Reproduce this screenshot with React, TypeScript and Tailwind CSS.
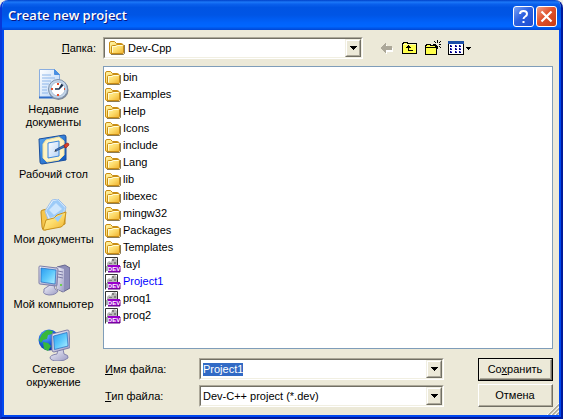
import { useEffect, useRef, useState } from "react";
import type { ReactNode } from "react";

const sunken =
  "border border-t-[#aca899] border-l-[#aca899] border-r-white border-b-white";
const sunkenInner =
  "border border-t-[#716f64] border-l-[#716f64] border-r-[#f1efe2] border-b-[#f1efe2]";
const raised =
  "border border-t-[#f1efe2] border-l-[#f1efe2] border-r-[#716f64] border-b-[#716f64]";
const raisedInner =
  "border border-t-white border-l-white border-r-[#aca899] border-b-[#aca899]";

const files = [
  { name: "bin", type: "folder" },
  { name: "Examples", type: "folder" },
  { name: "Help", type: "folder" },
  { name: "Icons", type: "folder" },
  { name: "include", type: "folder" },
  { name: "Lang", type: "folder" },
  { name: "lib", type: "folder" },
  { name: "libexec", type: "folder" },
  { name: "mingw32", type: "folder" },
  { name: "Packages", type: "folder" },
  { name: "Templates", type: "folder" },
  { name: "fayl", type: "dev" },
  { name: "Project1", type: "dev", compressed: true },
  { name: "proq1", type: "dev" },
  { name: "proq2", type: "dev" },
];

function Gradients() {
  return (
    <svg className="absolute size-0" aria-hidden="true">
      <defs>
        <linearGradient id="folder" x1="0" y1="0" x2="1" y2="1">
          <stop offset="0" stopColor="#fff6ac" />
          <stop offset="0.5" stopColor="#fddc6c" />
          <stop offset="1" stopColor="#eeb02c" />
        </linearGradient>
        <linearGradient id="screen" x1="0" y1="0" x2="1" y2="1">
          <stop offset="0" stopColor="#2b9cf0" />
          <stop offset="0.5" stopColor="#5cc8fb" />
          <stop offset="1" stopColor="#b8f2ff" />
        </linearGradient>
        <linearGradient id="metal" x1="0" y1="0" x2="1" y2="1">
          <stop offset="0" stopColor="#f4f4fb" />
          <stop offset="1" stopColor="#9c9cc4" />
        </linearGradient>
        <linearGradient id="paper" x1="0" y1="0" x2="1" y2="1">
          <stop offset="0" stopColor="#ffffff" />
          <stop offset="1" stopColor="#b4d2f6" />
        </linearGradient>
        <linearGradient id="desk" x1="0" y1="0" x2="1" y2="1">
          <stop offset="0" stopColor="#5aa6f0" />
          <stop offset="1" stopColor="#0b55bd" />
        </linearGradient>
        <radialGradient id="globe" cx="0.35" cy="0.3" r="0.8">
          <stop offset="0" stopColor="#6cb4ff" />
          <stop offset="0.5" stopColor="#1a62e0" />
          <stop offset="1" stopColor="#062a8c" />
        </radialGradient>
      </defs>
    </svg>
  );
}

function FolderIcon() {
  return (
    <svg viewBox="0 0 16 16" className="size-4 shrink-0" aria-hidden="true">
      <path d="M2 14.5h12.5l1-1V5" fill="none" stroke="#6f5a28" strokeOpacity="0.8" />
      <path
        d="M.5 3Q.5 1.5 2 1.5h3.5l2 2h5q1 0 1 1v9H2Q.5 13.5.5 12z"
        fill="url(#folder)"
        stroke="#c88c14"
      />
      <path
        d="M2.500 13.500v-7q0-1 1-1h3l1.500-1h5.500q1 0 1 1v7q0 1-1 1z"
        fill="url(#folder)"
        stroke="#c88c14"
      />
      <path d="M3.500 12.500v-6H7l1.500-1h5" fill="none" stroke="#fffbd6" />
    </svg>
  );
}

function DevIcon() {
  return (
    <svg viewBox="0 0 16 16" className="size-4 shrink-0" aria-hidden="true">
      <path d="M.5 15.500V.5h12v9" fill="#fff" stroke="#333" />
      <path d="M2 9V6l2-2 2 1 1-3 3-1 2 2v6z" fill="#b8b8b8" />
      <path d="M7 2h2v2H7zM4 6h3v1H4zM9 5h2v2H9zM2 8h3v1H2z" fill="#808080" />
      <path d="M1 9h2v5H1z" fill="#a8a8a8" />
      <path d="M3 8h12v7H3z" fill="#90c" />
      <path d="M3 15h12V9" fill="none" stroke="#5c0080" />
      <text
        x="9"
        y="14"
        textAnchor="middle"
        fontFamily="Liberation Sans, sans-serif"
        fontSize="6"
        fontWeight="bold"
        fill="#fff"
      >
        DEV
      </text>
    </svg>
  );
}

function RecentIcon() {
  return (
    <svg viewBox="0 0 32 32" className="size-8" aria-hidden="true">
      <path d="M1.500.5h15l5 5v23h-20z" fill="url(#paper)" stroke="#8aaee0" />
      <path d="M16.500.5v5h5z" fill="#4a8fe2" stroke="#4a8fe2" />
      <path
        d="M4 6h9M4 9h13M4 12h9M4 15h7M4 18h5M4 21h5M4 24h6"
        stroke="#8db6ea"
      />
      <path d="M1 28.500h19" stroke="#2f6cc8" strokeWidth="2" />
      <circle cx="20.500" cy="21" r="10" fill="#7d8796" />
      <circle cx="20" cy="20" r="9.500" fill="#c4d6ea" stroke="#7f93ac" />
      <circle cx="20" cy="20" r="7" fill="#fff" stroke="#a9bfd6" />
      <path d="M17 20h4l4-4M21 20l3-5" fill="none" stroke="#1d3350" strokeWidth="1.400" />
      <path d="M19 14h2v2h-2zM19 25h2v2h-2zM13 19h2v2h-2zM26 19h1v2h-1z" fill="#e8502c" />
    </svg>
  );
}

function DesktopIcon() {
  return (
    <svg viewBox="0 0 32 32" className="size-8" aria-hidden="true">
      <path d="M1 5l25-4q2 0 2 2v23l-24 4q-2 0-2-2z" fill="url(#desk)" stroke="#1a4f9e" />
      <path
        d="M8 6l13-3 5 4v14l-5 5-12 2-4-4V10z"
        fill="#fdf3c4"
        stroke="#f4e29a"
      />
      <path d="M10 9l11-2v15l-11 2z" fill="url(#paper)" stroke="#3b86dc" />
      <path d="M17 16l9-5 1 2-9 4z" fill="#3a76c4" stroke="#1c3f78" strokeWidth="0.700" />
      <path d="M16 17.500l2-1.500.5 1.500z" fill="#222" />
      <path d="M26 11l3-2q2 0 2 2l-3 3q-2 0-2-3z" fill="#d8402a" stroke="#8c1c10" strokeWidth="0.600" />
    </svg>
  );
}

function DocumentsIcon() {
  return (
    <svg viewBox="0 0 32 32" className="size-8" aria-hidden="true">
      <path d="M3 13q0-2 2-2l4-1 18 1v14L7 31q-3 0-3-3z" fill="#f5c64e" stroke="#c08a1c" />
      <path d="M7 12L14 1l6-1 8 8-3 12-14 3z" fill="url(#paper)" stroke="#9cc0ea" />
      <path d="M8 12l7-10 5-1 7 8-3 6-12 4z" fill="#9ccbf8" />
      <path d="M11 11l7-7 6 6-8 6z" fill="#cde6fd" />
      <path
        d="M5 31l3-10 8-2 3-3 9-3-2 12q-1 2-3 3L7 31z"
        fill="url(#folder)"
        stroke="#c8921c"
      />
      <path d="M16 19l9-4-5 8z" fill="#9ed0f8" />
    </svg>
  );
}

function ComputerIcon() {
  return (
    <svg viewBox="0 0 32 32" className="size-8" aria-hidden="true">
      <path d="M19 3l8-2 5 3v20l-7 4-6-3z" fill="#8e8eb8" stroke="#66668f" />
      <path d="M19 3l7 2v23l-7-3z" fill="url(#metal)" />
      <path d="M20 7l5 1M20 10l5 1M20 13l5 1" stroke="#7b7ba6" />
      <path d="M22 20h2v2h-2z" fill="#6cd04c" />
      <path d="M6 25l6-4h4l1 4 3 2q-2 4-9 4-7-1-5-4z" fill="url(#metal)" stroke="#8585ae" />
      <path d="M1 3q0-1 1-1l17 2q1 0 1 1l-1 16q0 1-1 1L2 20q-1 0-1-1z" fill="url(#metal)" stroke="#7c7ca8" />
      <path d="M3 4l15 2-1 14-14-2z" fill="url(#screen)" stroke="#1f6ac0" strokeWidth="0.700" />
    </svg>
  );
}

function NetworkIcon() {
  return (
    <svg viewBox="0 0 32 32" className="size-8" aria-hidden="true">
      <circle cx="11" cy="11" r="10.500" fill="url(#globe)" />
      <path
        d="M4 5l5-4 6 1-1 3-4 1-1 4-4 1-2 3-2-3zM5 13l5 1 3 3-3 5-4-2zM15 8l4-2 1 5-4 1z"
        fill="#38b83c"
      />
      <path d="M12 29q0-3 7-4l1-5h5l1 5q5 1 4 4-3 3-10 3-7 0-8-3z" fill="url(#metal)" stroke="#8585ae" />
      <path d="M14 5l15-4q2 0 2 1l1 16q0 1-1 1l-15 4q-2 0-2-2z" fill="url(#metal)" stroke="#7c7ca8" />
      <path d="M15.500 7L29 3.500 30 17l-13.500 3.500z" fill="url(#screen)" stroke="#1f6ac0" strokeWidth="0.700" />
    </svg>
  );
}

function BackIcon() {
  return (
    <svg viewBox="0 0 16 16" className="size-4" shapeRendering="crispEdges" aria-hidden="true">
      <path d="M3 9l5-4v3h6v4H8v3z" fill="#fff" />
      <path d="M1 8l6-5v3h6v4H7v3z" fill="#aca899" />
    </svg>
  );
}

function UpIcon() {
  return (
    <svg viewBox="0 0 16 16" className="size-4" shapeRendering="crispEdges" aria-hidden="true">
      <path d="M.5 13.500v-10h1v-1h4v1h9v10z" fill="#ffff4d" stroke="#000" />
      <path d="M1 4.500h13" stroke="#ffffb0" />
      <path d="M6 5h1v1h1v1h1v1H7v2h4v1H6V8H4V7h1V6h1z" fill="#000" />
    </svg>
  );
}

function NewFolderIcon() {
  return (
    <svg viewBox="0 0 16 16" className="size-4" shapeRendering="crispEdges" aria-hidden="true">
      <path d="M.5 14.500v-9h1v-1h4v1h6v9z" fill="#ffff4d" stroke="#000" />
      <path d="M1 7.500h10" stroke="#000" />
      <path
        d="M12 0h1v3h-1zM12 6h1v3h-1zM8 4h3v1H8zM14 4h2v1h-2zM9 1h1v1H9zM10 2h1v1h-1zM14 2h1v1h-1zM15 1h1v1h-1zM14 6h1v1h-1zM15 7h1v1h-1zM10 6h1v1h-1z"
        fill="#000"
      />
    </svg>
  );
}

function ViewsIcon() {
  return (
    <svg viewBox="0 0 24 16" className="h-4 w-6" shapeRendering="crispEdges" aria-hidden="true">
      <path d="M.5 1.500h15v13H.5z" fill="#fff" stroke="#000" />
      <path d="M0 1h16v3H0z" fill="#1b4fa8" />
      <path d="M2 5h2v2H2zM7 5h2v2H7zM11 5h2v2h-2zM2 8h2v2H2zM7 8h2v2H7zM11 8h2v2h-2zM2 11h2v2H2zM7 11h2v2H7zM11 11h2v2h-2z" fill="#000080" />
      <path d="M3 5h1v1H3zM8 5h1v1H8zM12 5h1v1h-1zM3 8h1v1H3zM8 8h1v1H8zM12 8h1v1h-1zM3 11h1v1H3zM8 11h1v1H8zM12 11h1v1h-1z" fill="#8080ff" />
      <path d="M18 7h5v1h-1v1h-1v1h-1V9h-1V8h-1z" fill="#000" />
    </svg>
  );
}

function DropArrow() {
  return (
    <span className={`block h-full w-4 ${raised}`}>
      <span className={`flex h-full items-center justify-center bg-[#ece9d8] ${raisedInner}`}>
        <svg viewBox="0 0 7 4" className="h-1 w-[7px]" shapeRendering="crispEdges" aria-hidden="true">
          <path d="M0 0h7v1H6v1H5v1H4v1H3V3H2V2H1V1H0z" fill="#000" />
        </svg>
      </span>
    </span>
  );
}

function Field({ children, className = "" }: { children: ReactNode; className?: string }) {
  return (
    <div className={`${sunken} ${className}`}>
      <div className={`relative flex h-full bg-white ${sunkenInner}`}>{children}</div>
    </div>
  );
}

const places = [
  { label: "Недавние документы", icon: <RecentIcon /> },
  { label: "Рабочий стол", icon: <DesktopIcon /> },
  { label: "Мои документы", icon: <DocumentsIcon /> },
  { label: "Мой компьютер", icon: <ComputerIcon /> },
  { label: "Сетевое окружение", icon: <NetworkIcon /> },
];

const tools = [
  { label: "Назад", icon: <BackIcon /> },
  { label: "Вверх", icon: <UpIcon /> },
  { label: "Новая папка", icon: <NewFolderIcon /> },
  { label: "Вид", icon: <ViewsIcon /> },
];

export default function App() {
  const [fileName, setFileName] = useState("Project1");
  const nameRef = useRef<HTMLInputElement>(null);

  useEffect(() => {
    nameRef.current?.focus();
    nameRef.current?.select();
  }, []);

  return (
    <div className="min-h-screen bg-[#f0f0ea] font-['Liberation_Sans',sans-serif] text-[11px] leading-[13px] text-black">
      <Gradients />
      <div className="flex min-h-screen flex-col overflow-hidden rounded-t-lg border-x-2 border-b-2 border-r-[#001a9c] border-b-[#001a9c] border-l-[#0838d8]">
        <header className="flex h-[30px] items-center justify-between bg-[linear-gradient(180deg,#0040c8_0%,#1c78f8_7%,#0a60ec_14%,#0054e3_25%,#0055e5_50%,#0062fb_75%,#0066ff_88%,#0046d4_100%)] pr-1 pl-1.5">
          <h1 className="font-['Open_Sans',sans-serif] text-[13px] leading-4 font-semibold text-white [text-shadow:1px_1px_#0a1883]">
            Create new project
          </h1>
          <div className="flex gap-0.5 pt-0.5">
            <button
              type="button"
              aria-label="Справка"
              className="flex size-[21px] items-center justify-center rounded-[3px] border border-white bg-[linear-gradient(135deg,#7ba2f4,#2d61e0_45%,#1c4cd0)]"
            >
              <svg viewBox="0 0 19 19" className="size-[19px]" aria-hidden="true">
                <path
                  d="M6 7q0-3 3.500-3T13 7q0 1.500-1.700 2.500T9.500 12M9.500 14v2"
                  fill="none"
                  stroke="#fff"
                  strokeWidth="2"
                />
              </svg>
            </button>
            <button
              type="button"
              aria-label="Закрыть"
              className="flex size-[21px] items-center justify-center rounded-[3px] border border-white bg-[linear-gradient(135deg,#f0a088,#e0512c_45%,#c83c14)]"
            >
              <svg viewBox="0 0 19 19" className="size-[19px]" aria-hidden="true">
                <path d="M4.500 4.500l10 10M14.500 4.500l-10 10" stroke="#fff" strokeWidth="2.200" />
              </svg>
            </button>
          </div>
        </header>

        <main className="flex flex-1 border-x-2 border-b-2 border-[#0048f0] bg-[#ece9d8]">
          <div className="relative flex flex-1 flex-col pt-[7px] pr-[6px] pb-2">
            <div className="flex items-center">
              <label htmlFor="folder-select" className="w-[99px] shrink-0 pr-[7px] text-right">
                <u>П</u>апка:
              </label>
              <Field className="h-[22px] max-w-[260px] flex-1">
                <span className="pointer-events-none absolute top-px left-1">
                  <FolderIcon />
                </span>
                <select
                  id="folder-select"
                  className="min-w-0 flex-1 appearance-none bg-white pl-[23px] outline-none"
                >
                  <option>Dev-Cpp</option>
                </select>
                <DropArrow />
              </Field>
              <div className="flex gap-[7px] pl-4">
                {tools.map((tool) => (
                  <button key={tool.label} type="button" aria-label={tool.label}>
                    {tool.icon}
                  </button>
                ))}
              </div>
            </div>

            <div className="flex flex-1 pt-[7px]">
              <nav className="flex w-[99px] shrink-0 flex-col gap-[5px] pt-[3px]">
                {places.map((place) => (
                  <button
                    key={place.label}
                    type="button"
                    className="flex min-h-[60px] flex-col items-center gap-0.5"
                  >
                    {place.icon}
                    <span className="px-2">{place.label}</span>
                  </button>
                ))}
              </nav>

              <div className="flex flex-1 flex-col gap-[9px]">
                <ul className="flex-1 border border-[#7f9db9] bg-white px-px py-0.5">
                  {files.map((file) => (
                    <li key={file.name} className="flex h-[17px] items-center gap-0.5">
                      {file.type === "folder" ? <FolderIcon /> : <DevIcon />}
                      <span className={file.compressed ? "text-[#0000ff]" : ""}>{file.name}</span>
                    </li>
                  ))}
                </ul>

                <form className="flex gap-[34px]" onSubmit={(e) => e.preventDefault()}>
                  <div className="flex flex-1 flex-col justify-between">
                    <div className="flex items-center">
                      <label htmlFor="file-name" className="w-24 pl-0.5">
                        <u>И</u>мя файла:
                      </label>
                      <Field className="h-[22px] flex-1">
                        <input
                          id="file-name"
                          ref={nameRef}
                          value={fileName}
                          onChange={(e) => setFileName(e.target.value)}
                          className="min-w-0 flex-1 pl-0.5 outline-none selection:bg-[#316ac5] selection:text-white"
                        />
                        <button type="button" aria-label="Список имён">
                          <DropArrow />
                        </button>
                      </Field>
                    </div>
                    <div className="flex items-center">
                      <label htmlFor="file-type" className="w-24 pl-0.5">
                        <u>Т</u>ип файла:
                      </label>
                      <Field className="h-[22px] flex-1">
                        <select
                          id="file-type"
                          className="min-w-0 flex-1 appearance-none bg-white pl-0.5 outline-none"
                        >
                          <option>Dev-C++ project (*.dev)</option>
                        </select>
                        <DropArrow />
                      </Field>
                    </div>
                  </div>
                  <div className="flex w-[75px] flex-col gap-[3px]">
                    <button type="submit" className="h-[23px] border border-black">
                      <span className={`block h-full ${raised}`}>
                        <span className="flex h-full items-center justify-center border-r border-b border-[#aca899]">
                          <span>
                            Со<u>х</u>ранить
                          </span>
                        </span>
                      </span>
                    </button>
                    <button
                      type="button"
                      className="h-[23px] border border-t-white border-l-white border-r-[#716f64] border-b-[#716f64]"
                    >
                      <span className="flex h-full items-center justify-center border-r border-b border-[#aca899]">
                        Отмена
                      </span>
                    </button>
                  </div>
                </form>
              </div>
            </div>

            <svg
              viewBox="0 0 12 12"
              className="absolute right-0 bottom-0 size-3"
              aria-hidden="true"
            >
              <path d="M0 12L12 0M4 12l8-8M8 12l4-4" stroke="#fff" />
              <path d="M1.500 12L12 1.500M5.500 12L12 5.500M9.500 12L12 9.500" stroke="#aca899" strokeWidth="1.600" />
            </svg>
          </div>
        </main>
      </div>
    </div>
  );
}
